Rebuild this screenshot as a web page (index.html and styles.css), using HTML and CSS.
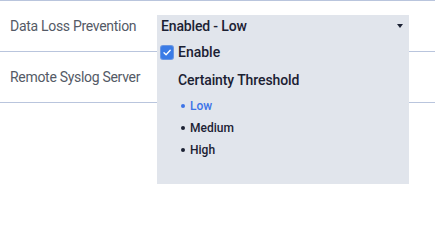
FILE: index.html
```html
<!DOCTYPE html>
<html>
<head>
<meta charset="utf-8">
<link rel="stylesheet" href="styles.css">
</head>
<body>
<div class="settings">
  <div class="row">
    <div class="label">Data Loss Prevention</div>
    <div class="value">
      <div class="select">
        <div class="trigger">
          <span class="trigger-text">Enabled - Low</span>
          <span class="caret"></span>
        </div>
        <div class="menu">
          <label class="check-row">
            <span class="checkbox">
              <svg width="12" height="13" viewBox="0 0 12 13"><path d="M3 6.8 L5.1 8.8 L9.2 4.3" fill="none" stroke="#fff" stroke-width="1.3" stroke-linecap="round" stroke-linejoin="round"/></svg>
            </span>
            <span class="check-text">Enable</span>
          </label>
          <div class="group-title">Certainty Threshold</div>
          <ul class="options">
            <li class="option active">Low</li>
            <li class="option">Medium</li>
            <li class="option">High</li>
          </ul>
        </div>
      </div>
    </div>
  </div>
  <div class="row">
    <div class="label">Remote Syslog Server</div>
    <div class="value"></div>
  </div>
</div>
</body>
</html>
```
FILE: styles.css
```css
html, body {
  margin: 0;
  padding: 0;
  background: #ffffff;
}
body {
  min-height: 212px;
  font-family: Roboto, "Liberation Sans", sans-serif;
}
.settings {
  border-top: 1px solid #b9c5dd;
}
.row {
  display: flex;
  align-items: center;
  height: 50px;
  border-bottom: 1px solid #b9c5dd;
}
.label {
  width: 147px;
  padding-left: 10px;
  font-size: 14px;
  letter-spacing: -0.3px;
  color: #545a66;
}
.value {
  flex: 0 0 252px;
}
.select {
  position: relative;
  z-index: 2;
  width: 252px;
  background: #e1e5ec;
}
.trigger {
  display: flex;
  align-items: center;
  justify-content: space-between;
  height: 23px;
  padding: 0 6px 0 4px;
}
.trigger-text {
  font-size: 14px;
  font-weight: 500;
  letter-spacing: -0.15px;
  color: #1b2133;
}
.caret {
  width: 0;
  height: 0;
  border-left: 3.5px solid transparent;
  border-right: 3.5px solid transparent;
  border-top: 4px solid #1b2133;
}
.menu {
  position: absolute;
  top: 100%;
  left: 0;
  width: 252px;
  height: 146px;
  background: #e1e5ec;
  box-sizing: border-box;
  padding: 0 4px;
}
.check-row {
  display: flex;
  align-items: center;
  gap: 5px;
  height: 29px;
}
.checkbox {
  display: block;
  width: 12px;
  height: 13px;
  border-radius: 2px;
  background: #3a7be6;
  box-shadow: 0 0 0 1px #6a96e2;
}
.checkbox svg { display: block; }
.check-text {
  font-size: 14px;
  font-weight: 500;
  color: #1b2133;
}
.group-title {
  padding-left: 17px;
  height: 26px;
  line-height: 26px;
  font-size: 14px;
  font-weight: 500;
  letter-spacing: -0.1px;
  color: #1b2133;
}
.options {
  list-style: none;
  margin: 0;
  padding: 2px 0 0 20px;
}
.option {
  position: relative;
  padding-left: 9px;
  height: 22px;
  line-height: 22px;
  font-size: 12px;
  font-weight: 500;
  color: #1b2133;
}
.option::before {
  content: "";
  position: absolute;
  left: 0;
  top: 9px;
  width: 4px;
  height: 4px;
  border-radius: 50%;
  background: currentColor;
}
.option.active {
  color: #3d74e8;
}
```
